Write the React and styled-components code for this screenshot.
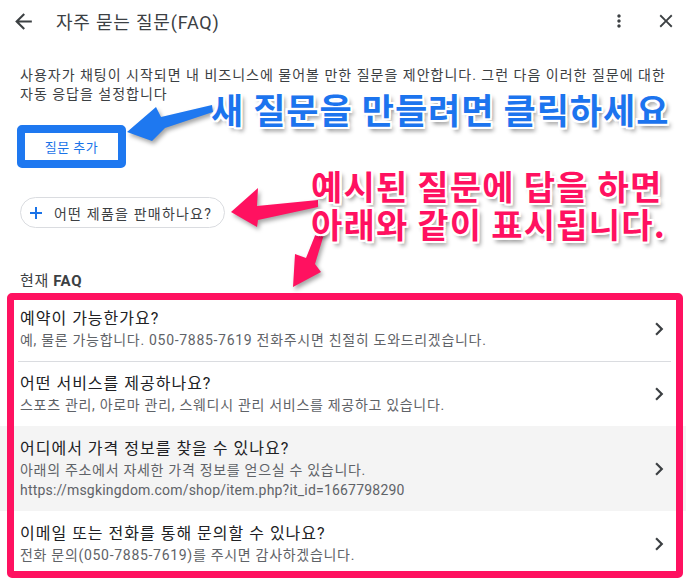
import styled, { createGlobalStyle } from "styled-components";

const GlobalStyle = createGlobalStyle`
  html, body {
    margin: 0;
    padding: 0;
    background: #fff;
  }
  body {
    font-family: Roboto, "Noto Sans CJK KR", sans-serif;
  }
`;

const Page = styled.div`
  position: relative;
  width: 686px;
  height: 581px;
  overflow: hidden;
  color: #3c4043;
`;

const Header = styled.header`
  height: 42px;
  display: flex;
  align-items: center;
  padding: 0 9px 0 11px;
`;

const Title = styled.h1`
  flex: 1;
  margin: 0 0 0 20px;
  font-size: 18px;
  font-weight: 400;
  letter-spacing: 0.8px;
  color: #3c4043;
`;

const IconSlot = styled.span`
  display: flex;
  align-items: center;
  justify-content: center;
  width: ${(p) => p.size}px;
  margin-left: ${(p) => p.gap || 0}px;
  color: #3c4043;
`;

const Content = styled.section`
  padding: 0 20px;
`;

const Description = styled.p`
  margin: 24px 0 0;
  font-size: 14px;
  line-height: 19px;
  letter-spacing: 1px;
  white-space: nowrap;
  color: #3c4043;
`;

const Highlight = styled.div`
  display: inline-flex;
  margin: 21px 0 0 -3px;
  border: 8px solid #1e78f0;
  border-radius: 5px;
`;

const AddButton = styled.button`
  width: 93px;
  height: 27px;
  border: none;
  background: #fff;
  color: #1a73e8;
  font-family: inherit;
  font-size: 13px;
  letter-spacing: 0.5px;
  padding: 0;
`;

const Chip = styled.div`
  display: flex;
  width: fit-content;
  align-items: center;
  gap: 11px;
  height: 29px;
  margin-top: 29px;
  padding: 0 12px 0 8px;
  border: 1px solid #dadce0;
  border-radius: 16px;
  font-size: 14px;
  letter-spacing: 1.2px;
  color: #3c4043;
`;

const SectionLabel = styled.h2`
  margin: 43px 0 5px;
  font-size: 15px;
  line-height: 20px;
  font-weight: 400;
  letter-spacing: 0.6px;
  color: #3c4043;

  b {
    font-weight: 700;
  }
`;

const FaqList = styled.div`
  position: relative;
`;

const Row = styled.div`
  position: relative;
  display: flex;
  align-items: center;
  padding: 12px 14px 11px 20px;
  background: ${(p) => (p.$active ? "#f4f4f4" : "#fff")};

  & + &::before {
    content: "";
    position: absolute;
    top: 0;
    left: 18px;
    right: 15px;
    height: 1px;
    background: #dadce0;
  }
`;

const RowText = styled.div`
  flex: 1;
`;

const RowTitle = styled.div`
  font-size: 16px;
  line-height: 22px;
  letter-spacing: 1px;
  color: #202124;
`;

const RowSub = styled.div`
  font-size: 14px;
  line-height: 20px;
  letter-spacing: ${(p) => (p.$latin ? "0.2px" : "0.7px")};
  color: #5f6368;
`;

const PinkFrame = styled.div`
  position: absolute;
  top: -3px;
  left: 7px;
  right: 3px;
  bottom: -2px;
  border: 7px solid #ff1160;
  border-radius: 5px;
  pointer-events: none;
`;

const Note = styled.div`
  position: absolute;
  left: ${(p) => p.x}px;
  top: ${(p) => p.y}px;
  font-family: "Noto Sans CJK KR", sans-serif;
  font-weight: 700;
  font-size: ${(p) => p.size}px;
  line-height: ${(p) => p.lh}px;
  letter-spacing: ${(p) => p.ls}px;
  color: ${(p) => p.color};
  white-space: nowrap;
  text-shadow: -2px -2px 0 #fff, 2px -2px 0 #fff, -2px 2px 0 #fff,
    2px 2px 0 #fff, 0 -2px 0 #fff, 0 2px 0 #fff, -2px 0 0 #fff, 2px 0 0 #fff,
    3px 4px 4px rgba(0, 0, 0, 0.45);
`;

const ArrowLayer = styled.svg`
  position: absolute;
  inset: 0;
  pointer-events: none;

  polygon {
    filter: drop-shadow(2px 3px 2px rgba(0, 0, 0, 0.35));
  }
`;

const faqs = [
  {
    q: "예약이 가능한가요?",
    a: ["예, 물론 가능합니다. 050-7885-7619 전화주시면 친절히 도와드리겠습니다."],
  },
  {
    q: "어떤 서비스를 제공하나요?",
    a: ["스포츠 관리, 아로마 관리, 스웨디시 관리 서비스를 제공하고 있습니다."],
  },
  {
    q: "어디에서 가격 정보를 찾을 수 있나요?",
    a: ["아래의 주소에서 자세한 가격 정보를 얻으실 수 있습니다."],
    url: "https://msgkingdom.com/shop/item.php?it_id=1667798290",
    active: true,
  },
  {
    q: "이메일 또는 전화를 통해 문의할 수 있나요?",
    a: ["전화 문의(050-7885-7619)를 주시면 감사하겠습니다."],
  },
];

const Chevron = () => (
  <svg width="26" height="26" viewBox="0 0 24 24" fill="#3c4043">
    <path d="M10 6L8.59 7.41 13.17 12l-4.58 4.59L10 18l6-6z" />
  </svg>
);

export default function App() {
  return (
    <Page>
      <GlobalStyle />
      <Header>
        <svg width="25" height="25" viewBox="0 0 24 24" fill="#3c4043">
          <path d="M20 11H7.83l5.59-5.59L12 4l-8 8 8 8 1.41-1.41L7.83 13H20v-2z" />
        </svg>
        <Title>자주 묻는 질문(FAQ)</Title>
        <IconSlot size={20}>
          <svg width="20" height="20" viewBox="0 0 24 24" fill="#3c4043">
            <path d="M12 8c1.1 0 2-.9 2-2s-.9-2-2-2-2 .9-2 2 .9 2 2 2zm0 2c-1.1 0-2 .9-2 2s.9 2 2 2 2-.9 2-2-.9-2-2-2zm0 6c-1.1 0-2 .9-2 2s.9 2 2 2 2-.9 2-2-.9-2-2-2z" />
          </svg>
        </IconSlot>
        <IconSlot size={22} gap={26}>
          <svg width="22" height="22" viewBox="0 0 24 24" fill="#3c4043">
            <path d="M19 6.41L17.59 5 12 10.59 6.41 5 5 6.41 10.59 12 5 17.59 6.41 19 12 13.41 17.59 19 19 17.59 13.41 12z" />
          </svg>
        </IconSlot>
      </Header>

      <Content>
        <Description>
          사용자가 채팅이 시작되면 내 비즈니스에 물어볼 만한 질문을 제안합니다. 그런 다음 이러한 질문에 대한
          <br />
          자동 응답을 설정합니다
        </Description>
        <Highlight>
          <AddButton>질문 추가</AddButton>
        </Highlight>
        <Chip>
          <svg width="14" height="14" viewBox="0 0 14 14">
            <path d="M7 1v12M1 7h12" stroke="#1a73e8" strokeWidth="2" />
          </svg>
          어떤 제품을 판매하나요?
        </Chip>
        <SectionLabel>
          현재 <b>FAQ</b>
        </SectionLabel>
      </Content>

      <FaqList>
        {faqs.map((f) => (
          <Row key={f.q} $active={f.active}>
            <RowText>
              <RowTitle>{f.q}</RowTitle>
              {f.a.map((line) => (
                <RowSub key={line}>{line}</RowSub>
              ))}
              {f.url && <RowSub $latin>{f.url}</RowSub>}
            </RowText>
            <Chevron />
          </Row>
        ))}
        <PinkFrame />
      </FaqList>

      <ArrowLayer width="686" height="581" viewBox="0 0 686 581">
        <polygon
          fill="#1e78f0"
          points="127,132 156,107 161,117 212,105 213,112 165,128 152,141"
        />
        <polygon
          fill="#ff1160"
          points="231,212 258,188 257,206 318,200 318,207 258,220 257,227"
        />
        <polygon
          fill="#ff1160"
          points="293,287 295,254 306,258 318,228 325,231 315,264 321,272"
        />
      </ArrowLayer>

      <Note x={211} y={90} size={35} lh={38} ls={1} color="#1c74ee">
        새 질문을 만들려면 클릭하세요
      </Note>
      <Note x={311} y={167} size={34} lh={38} ls={1.2} color="#ff1160">
        예시된 질문에 답을 하면
        <br />
        아래와 같이 표시됩니다.
      </Note>
    </Page>
  );
}
